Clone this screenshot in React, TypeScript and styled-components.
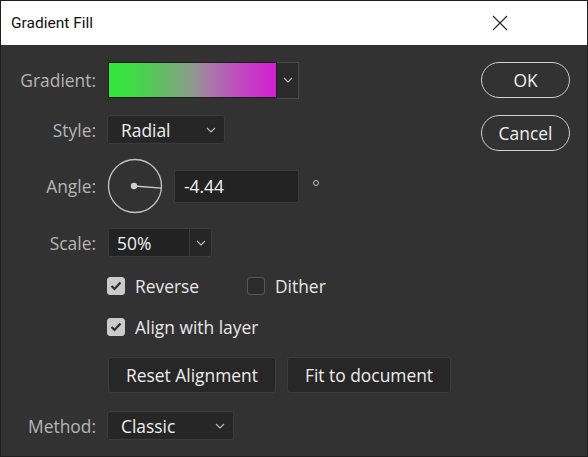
import React from 'react';
import styled, { createGlobalStyle } from 'styled-components';

const GlobalStyle = createGlobalStyle`
  html, body {
    margin: 0;
    padding: 0;
    background: #323232;
  }
  * {
    box-sizing: border-box;
  }
`;

const Window = styled.div`
  width: 588px;
  height: 457px;
  display: flex;
  flex-direction: column;
  border: 1px solid #1f1f1f;
  background: #323232;
  font-family: 'Open Sans', 'Liberation Sans', sans-serif;
  font-size: 17.4px;
  overflow: hidden;
`;

const TitleBar = styled.div`
  height: 44px;
  flex: none;
  display: flex;
  align-items: center;
  justify-content: space-between;
  padding: 0 0 0 10px;
  background: #ffffff;
  color: #111;
  font-family: Roboto, 'Open Sans', sans-serif;
  font-size: 15.5px;
`;

const CloseButton = styled.div`
  width: 46px;
  height: 44px;
  display: flex;
  align-items: center;
  justify-content: center;
  margin-right: 64px;
`;

const Body = styled.div`
  flex: 1;
  display: flex;
  padding-top: 17px;
`;

const Form = styled.div`
  flex: 1;
  display: flex;
  flex-direction: column;
`;

const Side = styled.div`
  width: 89px;
  margin-right: 17px;
  display: flex;
  flex-direction: column;
  gap: 17px;
`;

const PillButton = styled.div`
  height: 36px;
  border: 1.5px solid #cfcfcf;
  border-radius: 18px;
  display: flex;
  align-items: center;
  justify-content: center;
  color: #f0f0f0;
`;

const FieldRow = styled.div<{ $mt: number; $h: number }>`
  display: grid;
  grid-template-columns: 95px 1fr;
  grid-template-rows: ${(p) => p.$h}px;
  column-gap: 11px;
  align-items: center;
  margin-top: ${(p) => p.$mt}px;
  height: ${(p) => p.$h}px;
`;

const Label = styled.div`
  text-align: right;
  color: #b6b6b6;
  white-space: nowrap;
`;

const Controls = styled.div`
  display: flex;
  align-items: center;
  height: 100%;
`;

const Swatch = styled.div`
  width: 169px;
  height: 36px;
  margin-left: 1px;
  border: 1px solid #1c1c1c;
  background: linear-gradient(
    90deg,
    #2fe83a 0%,
    #3edc45 14%,
    #68b868 34%,
    #8e9a8e 50%,
    #a87aa8 60%,
    #bd4fbd 76%,
    #d11ed1 100%
  );
`;

const SwatchArrow = styled.div`
  width: 22px;
  height: 37px;
  border: 1px solid #4a4a4a;
  border-left: none;
  background: #2a2a2a;
  display: flex;
  align-items: center;
  justify-content: center;
`;

const Select = styled.div<{ $w: number }>`
  width: ${(p) => p.$w}px;
  height: 29px;
  display: flex;
  align-items: center;
  justify-content: space-between;
  padding: 0 8px 0 13px;
  background: #262626;
  border: 1px solid #3c3c3c;
  border-radius: 3px;
  color: #f0f0f0;
`;

const Combo = styled.div`
  width: 104px;
  height: 29px;
  margin-left: 1px;
  display: flex;
  background: #262626;
  border: 1px solid #3c3c3c;
  border-radius: 3px;
  color: #f0f0f0;
`;

const ComboValue = styled.div`
  width: 81px;
  display: flex;
  align-items: center;
  padding-left: 8px;
  border-right: 1px solid #3c3c3c;
  background: #222;
`;

const ComboArrow = styled.div`
  flex: 1;
  display: flex;
  align-items: center;
  justify-content: center;
`;

const AngleInput = styled.div`
  width: 125px;
  height: 33px;
  margin-left: 11px;
  display: flex;
  align-items: center;
  padding-left: 9px;
  background: #232323;
  border: 1px solid #3a3a3a;
  color: #f4f4f4;
`;

const Degree = styled.span`
  width: 6px;
  height: 6px;
  margin: 0 0 6px 14px;
  border: 1.2px solid #c0c0c0;
  border-radius: 50%;
`;

const CheckGroup = styled.div`
  display: grid;
  grid-template-columns: 140px auto;
  align-items: center;
`;

const CheckItem = styled.div`
  display: flex;
  align-items: center;
  gap: 10px;
  height: 18px;
  color: #e8e8e8;
  white-space: nowrap;
`;

const Box = styled.div<{ $checked: boolean }>`
  width: 18px;
  height: 18px;
  flex: none;
  border-radius: 3px;
  display: flex;
  align-items: center;
  justify-content: center;
  background: ${(p) => (p.$checked ? '#cbcbcb' : '#2c2c2c')};
  border: 1px solid ${(p) => (p.$checked ? '#cbcbcb' : '#5a5a5a')};
`;

const ButtonGroup = styled.div`
  display: flex;
  gap: 11px;
  margin-left: 1px;
`;

const FlatButton = styled.div<{ $w: number }>`
  width: ${(p) => p.$w}px;
  height: 36px;
  display: flex;
  align-items: center;
  justify-content: center;
  background: #272727;
  border: 1px solid #3b3b3b;
  border-radius: 3px;
  color: #ececec;
`;

const Chevron = () => (
  <svg width='10' height='6' viewBox='0 0 10 6'>
    <path d='M1 1 L5 5 L9 1' fill='none' stroke='#bdbdbd' strokeWidth='1.1' />
  </svg>
);

const Check: React.FC<{ checked: boolean; label: string }> = ({ checked, label }) => (
  <CheckItem>
    <Box $checked={checked}>
      {checked && (
        <svg width='12' height='10' viewBox='0 0 12 10'>
          <path d='M1.5 5 L4.5 8 L10.5 1.5' fill='none' stroke='#2e2e2e' strokeWidth='2.2' />
        </svg>
      )}
    </Box>
    {label}
  </CheckItem>
);

const Dial: React.FC<{ angle: number }> = ({ angle }) => {
  const r = 26.5;
  const rad = (-angle * Math.PI) / 180;
  return (
    <svg width='56' height='56' viewBox='0 0 56 56'>
      <circle cx='28' cy='28' r={r} fill='none' stroke='#c4c4c4' strokeWidth='1.3' />
      <circle cx='27' cy='28' r='3.2' fill='#cfcfcf' />
      <line
        x1='27'
        y1='28'
        x2={28 + r * Math.cos(rad)}
        y2={28 + r * Math.sin(rad)}
        stroke='#cfcfcf'
        strokeWidth='1.3'
      />
    </svg>
  );
};

export default function App() {
  return (
    <>
      <GlobalStyle />
      <Window>
        <TitleBar>
          Gradient Fill
          <CloseButton>
            <svg width='16' height='16' viewBox='0 0 16 16'>
              <path d='M1 1 L15 15 M15 1 L1 15' stroke='#222' strokeWidth='1.1' />
            </svg>
          </CloseButton>
        </TitleBar>
        <Body>
          <Form>
            <FieldRow $mt={0} $h={36}>
              <Label>Gradient:</Label>
              <Controls>
                <Swatch />
                <SwatchArrow>
                  <Chevron />
                </SwatchArrow>
              </Controls>
            </FieldRow>
            <FieldRow $mt={17} $h={29}>
              <Label>Style:</Label>
              <Controls>
                <Select $w={118}>
                  Radial
                  <Chevron />
                </Select>
              </Controls>
            </FieldRow>
            <FieldRow $mt={15} $h={54}>
              <Label>Angle:</Label>
              <Controls>
                <Dial angle={-4.44} />
                <AngleInput>-4.44</AngleInput>
                <Degree />
              </Controls>
            </FieldRow>
            <FieldRow $mt={15} $h={29}>
              <Label>Scale:</Label>
              <Controls>
                <Combo>
                  <ComboValue>50%</ComboValue>
                  <ComboArrow>
                    <Chevron />
                  </ComboArrow>
                </Combo>
              </Controls>
            </FieldRow>
            <FieldRow $mt={20} $h={18}>
              <span />
              <CheckGroup>
                <Check checked label='Reverse' />
                <Check checked={false} label='Dither' />
              </CheckGroup>
            </FieldRow>
            <FieldRow $mt={23} $h={18}>
              <span />
              <Check checked label='Align with layer' />
            </FieldRow>
            <FieldRow $mt={21} $h={36}>
              <span />
              <ButtonGroup>
                <FlatButton $w={168}>Reset Alignment</FlatButton>
                <FlatButton $w={164}>Fit to document</FlatButton>
              </ButtonGroup>
            </FieldRow>
            <FieldRow $mt={18} $h={29}>
              <Label>Method:</Label>
              <Controls>
                <Select $w={127}>
                  Classic
                  <Chevron />
                </Select>
              </Controls>
            </FieldRow>
          </Form>
          <Side>
            <PillButton>OK</PillButton>
            <PillButton>Cancel</PillButton>
          </Side>
        </Body>
      </Window>
    </>
  );
}
